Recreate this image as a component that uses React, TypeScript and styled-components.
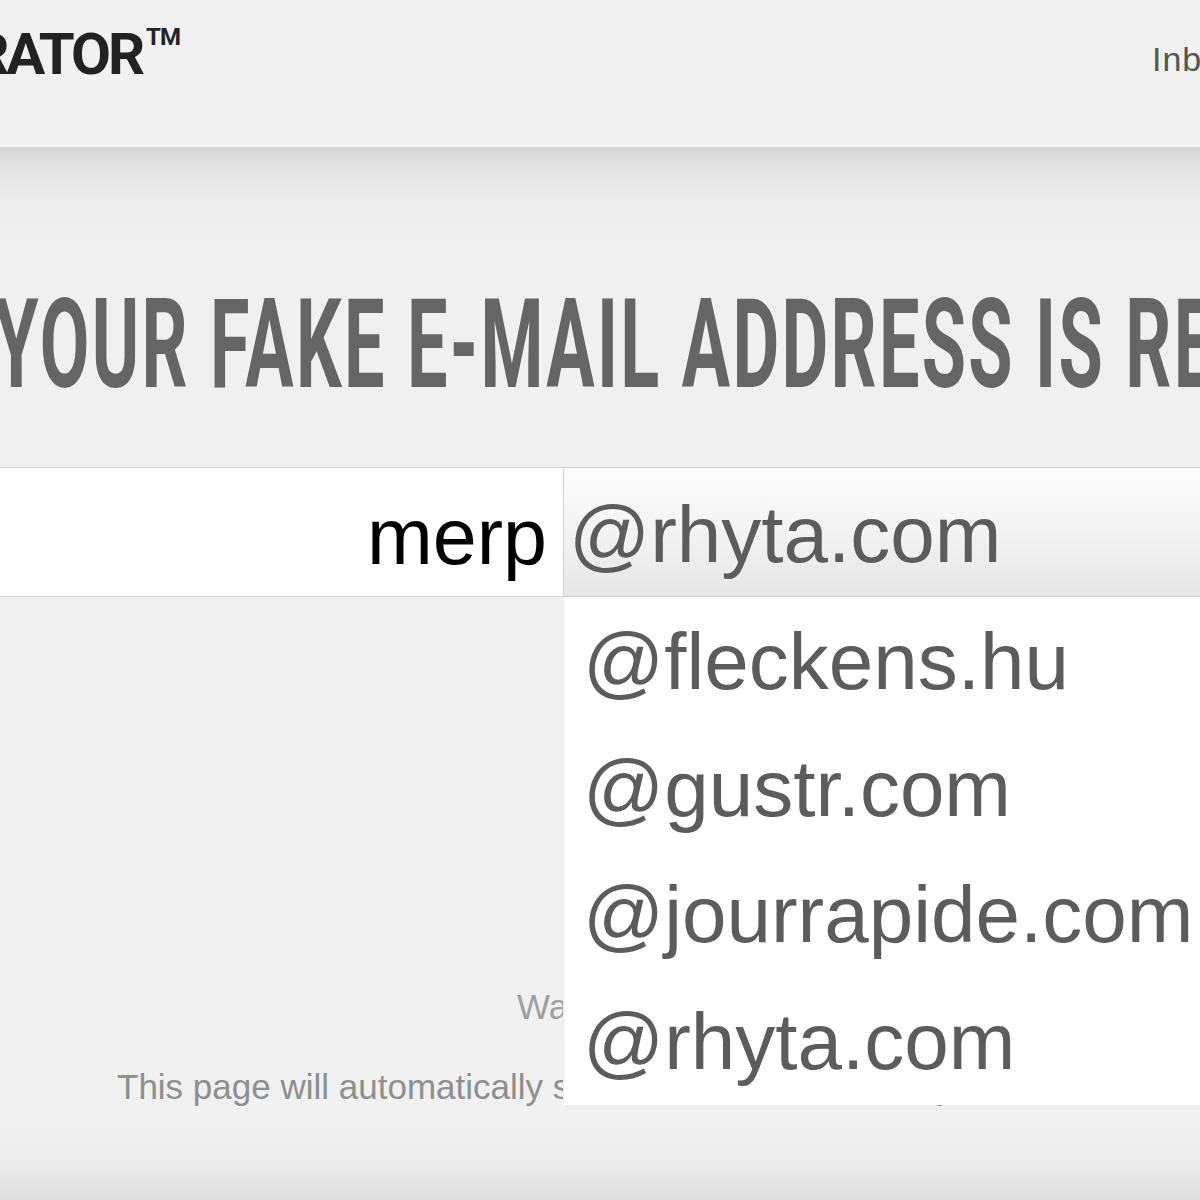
import styled, { createGlobalStyle } from 'styled-components';

const GlobalStyle = createGlobalStyle`
  html, body {
    margin: 0;
    padding: 0;
    background: #f0f0f0;
    overflow: hidden;
  }
  body {
    font-family: "Liberation Sans", Arial, sans-serif;
  }
`;

const domains = ['@fleckens.hu', '@gustr.com', '@jourrapide.com', '@rhyta.com'];

const Page = styled.div({
  width: '1200px',
  height: '1200px',
  display: 'flex',
  flexDirection: 'column',
  overflow: 'hidden',
});

const Header = styled.header({
  height: '147px',
  flexShrink: 0,
  display: 'flex',
  alignItems: 'flex-start',
  background: '#f1f1f1',
  borderBottom: '1px solid #f6f6f6',
  boxSizing: 'border-box',
});

const Logo = styled.div({
  width: '180px',
  marginTop: '25px',
  display: 'flex',
  justifyContent: 'flex-end',
  whiteSpace: 'nowrap',
  fontFamily: 'Roboto, "Liberation Sans", sans-serif',
  fontWeight: 700,
  fontSize: '58px',
  lineHeight: 1,
  color: '#222',
  letterSpacing: '-3px',
});

const Trademark = styled.span({
  fontSize: '24px',
  verticalAlign: '36px',
  letterSpacing: '-1px',
  marginLeft: '4px',
});

const Nav = styled.nav({
  marginLeft: 'auto',
  width: '48px',
  marginTop: '42px',
  whiteSpace: 'nowrap',
  fontSize: '34px',
  lineHeight: 1,
  color: '#555',
  letterSpacing: '1px',
});

const Main = styled.main({
  flex: 1,
  position: 'relative',
  background:
    'linear-gradient(to bottom, #d5d5d5 0px, #e4e4e4 22px, #ebebeb 50px, #f0f0f0 100px, #f1f1f1 970px, #ebebeb 1020px, #dedede 1053px)',
});

const Heading = styled.h1({
  margin: '136px 0 0 -6px',
  whiteSpace: 'nowrap',
  fontFamily: 'Roboto, "Liberation Sans", sans-serif',
  fontWeight: 700,
  fontSize: '124px',
  lineHeight: 1,
  height: '124px',
  color: '#656565',
  letterSpacing: '4px',
  transform: 'scaleX(0.58)',
  transformOrigin: 'left center',
});

const FormRow = styled.div({
  marginTop: '60px',
  position: 'relative',
  display: 'grid',
  gridTemplateColumns: '563px 1fr',
  height: '130px',
  borderTop: '1px solid #cfcfcf',
  borderBottom: '1px solid #cfcfcf',
  boxSizing: 'border-box',
});

const NameInput = styled.div({
  background: '#fff',
  textAlign: 'right',
  padding: '24px 16px 0 0',
  fontSize: '79px',
  lineHeight: '90px',
  color: '#000',
});

const DomainSelect = styled.div({
  borderLeft: '1px solid #d2d2d2',
  background: 'linear-gradient(to bottom, #fcfcfc 0%, #f3f3f3 50%, #e6e6e6 100%)',
  padding: '22px 0 0 5px',
  fontSize: '80px',
  lineHeight: '90px',
  color: '#5c5c5c',
  whiteSpace: 'nowrap',
});

const Dropdown = styled.ul({
  position: 'absolute',
  top: '129px',
  left: '563px',
  width: '700px',
  margin: 0,
  padding: '2px 0 0',
  listStyle: 'none',
  background: '#fff',
  borderLeft: '1px solid #ececec',
  zIndex: 2,
});

const Option = styled.li({
  height: '126.5px',
  lineHeight: '126.5px',
  paddingLeft: '19px',
  fontSize: '80px',
  color: '#5c5c5c',
  whiteSpace: 'nowrap',
});

const Notice = styled.p<{ $indent: number; $gap: number; $tone: string }>`
  margin: ${(p) => p.$gap}px 0 0;
  padding-left: ${(p) => p.$indent}px;
  font-size: 35px;
  line-height: 40px;
  color: ${(p) => p.$tone};
  white-space: nowrap;
`;

export default function App() {
  return (
    <>
      <GlobalStyle />
      <Page>
        <Header>
          <Logo>
            FAKE MAIL GENERATOR<Trademark>TM</Trademark>
          </Logo>
          <Nav>Inbox</Nav>
        </Header>
        <Main>
          <Heading>YOUR FAKE E-MAIL ADDRESS IS READY</Heading>
          <FormRow>
            <NameInput>merp</NameInput>
            <DomainSelect>@rhyta.com</DomainSelect>
            <Dropdown>
              {domains.map((d) => (
                <Option key={d}>{d}</Option>
              ))}
            </Dropdown>
          </FormRow>
          <Notice $indent={517} $gap={390} $tone="#a0a0a0">
            Waiting for e-mails...
          </Notice>
          <Notice $indent={117} $gap={40} $tone="#8f8f8f">
            This page will automatically show new e-mails as they arrive.
          </Notice>
        </Main>
      </Page>
    </>
  );
}
